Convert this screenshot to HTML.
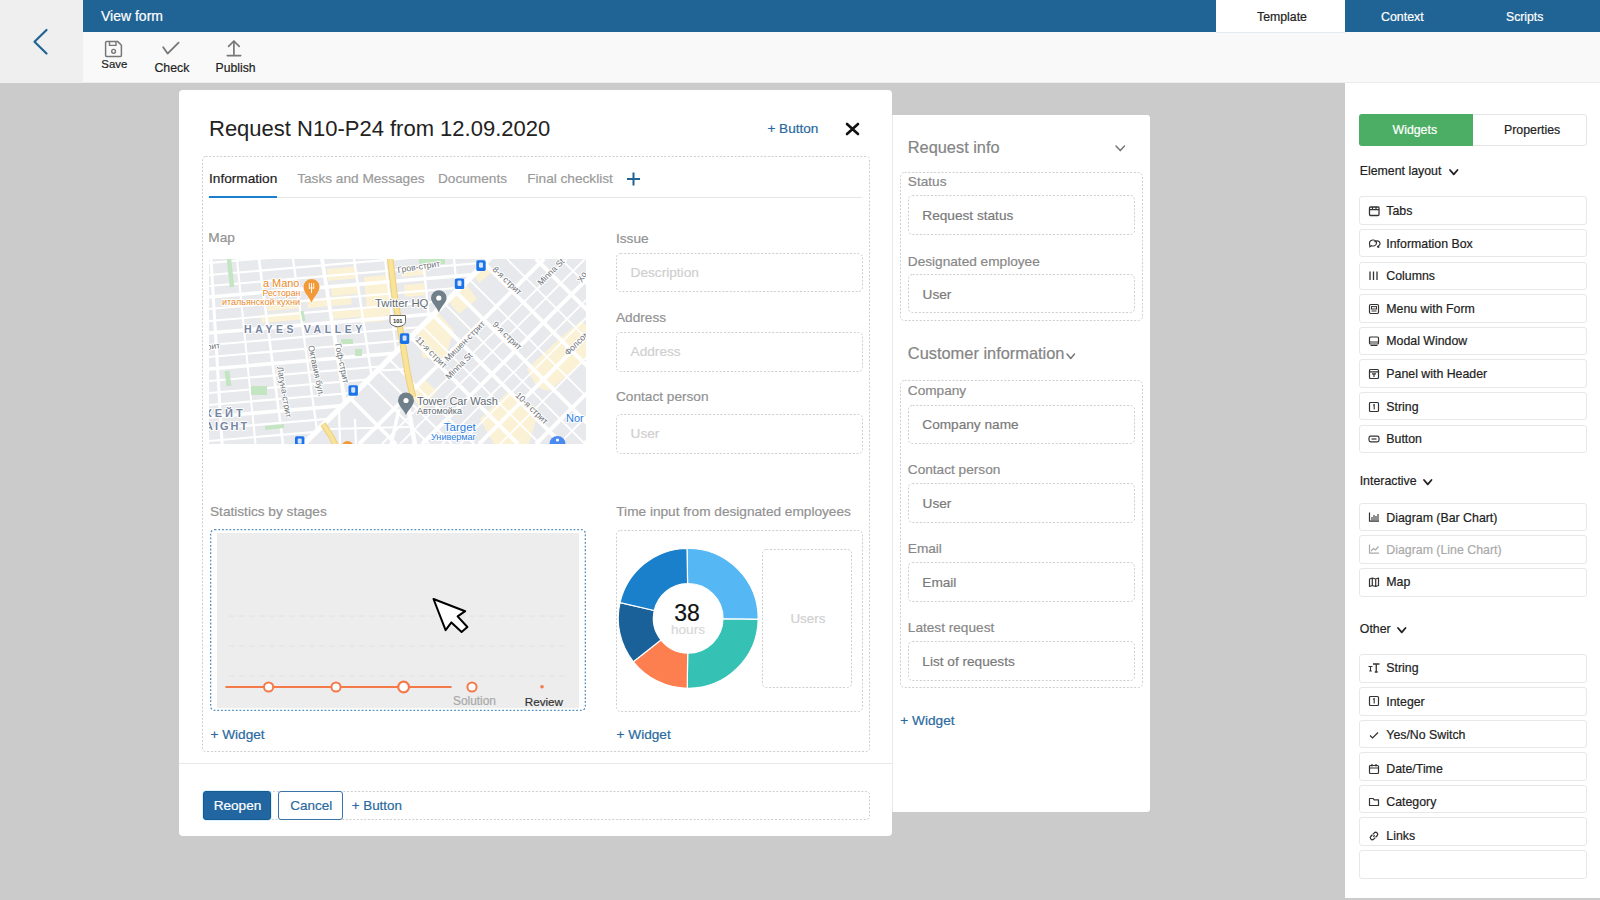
<!DOCTYPE html><html><head><meta charset="utf-8"><style>
html,body{margin:0;padding:0;width:1600px;height:900px;overflow:hidden;background:#cbcbcb;font-family:"Liberation Sans",sans-serif;}
.a{position:absolute;box-sizing:border-box;}
.t{position:absolute;white-space:nowrap;line-height:1;-webkit-text-stroke:0.2px currentColor;}
svg{position:absolute;overflow:visible;}
</style></head><body>

<div class="a" style="left:0px;top:0px;width:83px;height:83px;background:#efefef;"></div>
<div class="a" style="left:83px;top:0px;width:1517px;height:32px;background:#1f6495;"></div>
<div class="a" style="left:83px;top:32px;width:1517px;height:51px;background:#f9f9f9;"></div>
<div class="a" style="left:83px;top:82px;width:1517px;height:1px;background:#ececec;"></div>
<div class="a" style="left:1216px;top:0px;width:129px;height:32px;background:#ffffff;"></div>
<div class="a" style="left:1216px;top:32px;width:129px;height:1px;background:#e4ebf1;"></div>
<div class="t" style="left:101.00px;top:8.75px;font-size:14px;color:#ffffff;">View form</div>
<div class="t" style="left:1257.00px;top:10.89px;font-size:12.3px;color:#222;">Template</div>
<div class="t" style="left:1381.00px;top:10.80px;font-size:12.4px;color:#ffffff;">Context</div>
<div class="t" style="left:1506.00px;top:10.97px;font-size:12.2px;color:#ffffff;">Scripts</div>
<svg style="left:0;top:0" width="83" height="82"><path d="M46.5 30 L34.5 41.8 L46.5 53.5" fill="none" stroke="#1f6495" stroke-width="2.2" stroke-linecap="round" stroke-linejoin="round"/></svg>
<div class="t" style="left:101.30px;top:59.15px;font-size:11.4px;color:#1e1e1e;">Save</div>
<div class="t" style="left:154.40px;top:61.74px;font-size:12.35px;color:#1e1e1e;">Check</div>
<div class="t" style="left:215.60px;top:61.87px;font-size:12.2px;color:#1e1e1e;">Publish</div>
<svg style="left:100;top:36px;left:100px" width="30" height="24"><path d="M6.6 5.6 h11.2 l3.6 3.6 v10.2 a1 1 0 0 1 -1 1 h-13.8 a1 1 0 0 1 -1 -1 v-12.8 a1 1 0 0 1 1 -1z" fill="none" stroke="#777" stroke-width="1.5"/><path d="M9.5 5.8 v3.6 h6.5 v-3.6" fill="none" stroke="#777" stroke-width="1.4"/><circle cx="13.6" cy="15.3" r="1.9" fill="none" stroke="#777" stroke-width="1.4"/></svg>
<svg style="left:150px;top:36px" width="40" height="24"><path d="M13.2 11.2 L17.6 17.6 L28.6 6.6" fill="none" stroke="#777" stroke-width="1.8" stroke-linecap="round" stroke-linejoin="round"/></svg>
<svg style="left:220px;top:36px" width="30" height="24"><path d="M13.9 18.2 V5.4 M8.6 10.4 L13.9 5 L19.2 10.4" fill="none" stroke="#777" stroke-width="1.7" stroke-linecap="round" stroke-linejoin="round"/><path d="M7.4 19.6 H20.6" stroke="#777" stroke-width="1.8" stroke-linecap="round"/></svg>
<div class="a" style="left:1345px;top:83px;width:255px;height:817px;background:#ffffff;"></div>
<div class="a" style="left:1359px;top:114px;width:228px;height:32px;border:1px solid #e6e6e6;border-radius:3px;background:#fff;"></div>
<div class="a" style="left:1359px;top:114px;width:114px;height:32px;background:#4cae64;border-radius:3px 0 0 3px;"></div>
<div class="t" style="left:1392.50px;top:124.24px;font-size:12.35px;color:#ffffff;">Widgets</div>
<div class="t" style="left:1504.00px;top:124.24px;font-size:12.35px;color:#222;">Properties</div>
<div class="t" style="left:1359.70px;top:165.14px;font-size:12.35px;color:#222;">Element layout</div>
<svg style="left:1447.5px;top:168.2px" width="11.5" height="8.4"><path d="M2 2 L5.75 6.4 L9.5 2" fill="none" stroke="#222" stroke-width="1.8" stroke-linecap="round" stroke-linejoin="round"/></svg>
<div class="t" style="left:1359.70px;top:474.84px;font-size:12.35px;color:#222;">Interactive</div>
<svg style="left:1422.3px;top:477.6px" width="11.5" height="8.4"><path d="M2 2 L5.75 6.4 L9.5 2" fill="none" stroke="#222" stroke-width="1.8" stroke-linecap="round" stroke-linejoin="round"/></svg>
<div class="t" style="left:1359.80px;top:622.84px;font-size:12.35px;color:#222;">Other</div>
<svg style="left:1396.2px;top:625.8px" width="11.5" height="8.4"><path d="M2 2 L5.75 6.4 L9.5 2" fill="none" stroke="#222" stroke-width="1.8" stroke-linecap="round" stroke-linejoin="round"/></svg>
<div class="a" style="left:1358.5px;top:196.3px;width:228.5px;height:28.5px;border:1px solid #e8e8e8;border-radius:3px;background:#fff;"></div>
<svg style="left:1368px;top:204.90px" width="12" height="12"><rect x="1.5" y="2" width="9.5" height="8.5" rx="1" fill="none" stroke="#333" stroke-width="1.3"/><path d="M1.5 4.6 H11 M4.5 2 V4.6 M8 2 V4.6" stroke="#333" stroke-width="1.2"/></svg>
<div class="t" style="left:1386.30px;top:205.04px;font-size:12.35px;color:#222;">Tabs</div>
<div class="a" style="left:1358.5px;top:228.9px;width:228.5px;height:28.5px;border:1px solid #e8e8e8;border-radius:3px;background:#fff;"></div>
<svg style="left:1368px;top:237.50px" width="12" height="12"><path d="M1.5 5 a3.5 3 0 1 1 2 2.7 l-1.6 1 z" fill="none" stroke="#333" stroke-width="1.2"/><path d="M6.5 4.2 a3 2.7 0 1 1 3.5 4 l1.2 1.2 l-2.2 -.8" fill="none" stroke="#333" stroke-width="1.2"/></svg>
<div class="t" style="left:1386.30px;top:237.64px;font-size:12.35px;color:#222;">Information Box</div>
<div class="a" style="left:1358.5px;top:261.5px;width:228.5px;height:28.5px;border:1px solid #e8e8e8;border-radius:3px;background:#fff;"></div>
<svg style="left:1368px;top:270.10px" width="12" height="12"><path d="M2 1.5 V10 M5.5 1.5 V10 M9 1.5 V10" stroke="#333" stroke-width="1.3"/></svg>
<div class="t" style="left:1386.30px;top:270.24px;font-size:12.35px;color:#222;">Columns</div>
<div class="a" style="left:1358.5px;top:294.1px;width:228.5px;height:28.5px;border:1px solid #e8e8e8;border-radius:3px;background:#fff;"></div>
<svg style="left:1368px;top:302.70px" width="12" height="12"><rect x="1.5" y="1.5" width="9" height="9" rx="1.2" fill="none" stroke="#333" stroke-width="1.2"/><rect x="3.5" y="3.6" width="5" height="2.4" fill="none" stroke="#333" stroke-width="1"/><path d="M3.5 8 H8.5" stroke="#333" stroke-width="1"/></svg>
<div class="t" style="left:1386.30px;top:302.84px;font-size:12.35px;color:#222;">Menu with Form</div>
<div class="a" style="left:1358.5px;top:326.70000000000005px;width:228.5px;height:28.5px;border:1px solid #e8e8e8;border-radius:3px;background:#fff;"></div>
<svg style="left:1368px;top:335.30px" width="12" height="12"><rect x="1.5" y="2" width="9" height="7" rx="1" fill="none" stroke="#333" stroke-width="1.2"/><path d="M1.5 7 H10.5 M2.5 10.5 H9.5" stroke="#333" stroke-width="1.2"/></svg>
<div class="t" style="left:1386.30px;top:335.44px;font-size:12.35px;color:#222;">Modal Window</div>
<div class="a" style="left:1358.5px;top:359.3px;width:228.5px;height:28.5px;border:1px solid #e8e8e8;border-radius:3px;background:#fff;"></div>
<svg style="left:1368px;top:367.90px" width="12" height="12"><rect x="1.5" y="1.5" width="9" height="9" rx="1" fill="none" stroke="#333" stroke-width="1.2"/><path d="M1.5 3.8 H10.5 M4 5.8 H8 M6 5.8 V9" stroke="#333" stroke-width="1.2"/></svg>
<div class="t" style="left:1386.30px;top:368.04px;font-size:12.35px;color:#222;">Panel with Header</div>
<div class="a" style="left:1358.5px;top:391.90000000000003px;width:228.5px;height:28.5px;border:1px solid #e8e8e8;border-radius:3px;background:#fff;"></div>
<svg style="left:1368px;top:400.50px" width="12" height="12"><rect x="1.5" y="1.5" width="9" height="9" rx="1" fill="none" stroke="#333" stroke-width="1.2"/><path d="M5 4.2 L6.2 3.6 V8.6" fill="none" stroke="#333" stroke-width="1.1"/></svg>
<div class="t" style="left:1386.30px;top:400.64px;font-size:12.35px;color:#222;">String</div>
<div class="a" style="left:1358.5px;top:424.5px;width:228.5px;height:28.5px;border:1px solid #e8e8e8;border-radius:3px;background:#fff;"></div>
<svg style="left:1368px;top:433.10px" width="12" height="12"><rect x="1" y="3.2" width="10" height="5.6" rx="1.8" fill="none" stroke="#333" stroke-width="1.2"/><path d="M3.5 6 H8.5" stroke="#333" stroke-width="1.2"/></svg>
<div class="t" style="left:1386.30px;top:433.24px;font-size:12.35px;color:#222;">Button</div>
<div class="a" style="left:1358.5px;top:502.7px;width:228.5px;height:28.5px;border:1px solid #e8e8e8;border-radius:3px;background:#fff;"></div>
<svg style="left:1368px;top:511.40px" width="12" height="12"><path d="M1.5 1.5 V10.2 H11" fill="none" stroke="#333" stroke-width="1.2"/><path d="M4 9.5 V6 M6 9.5 V4 M8 9.5 V5 M10 9.5 V3" stroke="#333" stroke-width="1.1"/></svg>
<div class="t" style="left:1386.30px;top:511.54px;font-size:12.35px;color:#222;">Diagram (Bar Chart)</div>
<div class="a" style="left:1358.5px;top:535.3px;width:228.5px;height:28.5px;border:1px solid #e8e8e8;border-radius:3px;background:#fff;"></div>
<svg style="left:1368px;top:543.40px" width="12" height="12"><path d="M1.5 1.5 V10.2 H11" fill="none" stroke="#aaa" stroke-width="1.2"/><path d="M3 8 L5.5 5.5 L7.5 7 L10.5 3.5" fill="none" stroke="#aaa" stroke-width="1.2"/></svg>
<div class="t" style="left:1386.30px;top:543.54px;font-size:12.35px;color:#aaa;">Diagram (Line Chart)</div>
<div class="a" style="left:1358.5px;top:568.0px;width:228.5px;height:28.5px;border:1px solid #e8e8e8;border-radius:3px;background:#fff;"></div>
<svg style="left:1368px;top:576.10px" width="12" height="12"><path d="M1.5 3 L4.3 2 L7.7 3 L10.5 2 V9.5 L7.7 10.5 L4.3 9.5 L1.5 10.5 Z M4.3 2 V9.5 M7.7 3 V10.5" fill="none" stroke="#333" stroke-width="1.2" stroke-linejoin="round"/></svg>
<div class="t" style="left:1386.30px;top:576.24px;font-size:12.35px;color:#222;">Map</div>
<div class="a" style="left:1358.5px;top:654.4px;width:228.5px;height:28.5px;border:1px solid #e8e8e8;border-radius:3px;background:#fff;"></div>
<svg style="left:1368px;top:662.00px" width="12" height="12"><path d="M0.5 4.5 H4.5 M2.5 4.5 V9 M1.2 9 H3.8" stroke="#333" stroke-width="1.1"/><path d="M5 2 H11.5 M8.25 2 V10 M6.8 10 H9.7" stroke="#333" stroke-width="1.3"/></svg>
<div class="t" style="left:1386.30px;top:662.14px;font-size:12.35px;color:#222;">String</div>
<div class="a" style="left:1358.5px;top:687.0px;width:228.5px;height:28.5px;border:1px solid #e8e8e8;border-radius:3px;background:#fff;"></div>
<svg style="left:1368px;top:695.40px" width="12" height="12"><rect x="1.5" y="1.5" width="9" height="9" rx="1" fill="none" stroke="#333" stroke-width="1.2"/><path d="M5 4.2 L6.2 3.6 V8.6" fill="none" stroke="#333" stroke-width="1.1"/></svg>
<div class="t" style="left:1386.30px;top:695.54px;font-size:12.35px;color:#222;">Integer</div>
<div class="a" style="left:1358.5px;top:719.6px;width:228.5px;height:28.5px;border:1px solid #e8e8e8;border-radius:3px;background:#fff;"></div>
<svg style="left:1368px;top:729.00px" width="12" height="12"><path d="M2 6.5 L4.6 9 L10 3.5" fill="none" stroke="#333" stroke-width="1.2"/></svg>
<div class="t" style="left:1386.30px;top:729.14px;font-size:12.35px;color:#222;">Yes/No Switch</div>
<div class="a" style="left:1358.5px;top:752.2px;width:228.5px;height:28.5px;border:1px solid #e8e8e8;border-radius:3px;background:#fff;"></div>
<svg style="left:1368px;top:762.70px" width="12" height="12"><rect x="1.5" y="2.5" width="9" height="8" rx="1" fill="none" stroke="#333" stroke-width="1.2"/><path d="M1.5 5 H10.5 M4 1 V3.5 M8 1 V3.5" stroke="#333" stroke-width="1.2"/></svg>
<div class="t" style="left:1386.30px;top:762.84px;font-size:12.35px;color:#222;">Date/Time</div>
<div class="a" style="left:1358.5px;top:784.8px;width:228.5px;height:28.5px;border:1px solid #e8e8e8;border-radius:3px;background:#fff;"></div>
<svg style="left:1368px;top:796.20px" width="12" height="12"><path d="M1.5 2.5 H5 L6.2 3.8 H10.5 V9.5 H1.5 Z" fill="none" stroke="#333" stroke-width="1.2" stroke-linejoin="round"/></svg>
<div class="t" style="left:1386.30px;top:796.34px;font-size:12.35px;color:#222;">Category</div>
<div class="a" style="left:1358.5px;top:817.4px;width:228.5px;height:28.5px;border:1px solid #e8e8e8;border-radius:3px;background:#fff;"></div>
<svg style="left:1368px;top:829.70px" width="12" height="12"><path d="M5.3 6.7 L6.7 5.3 M4.8 4.4 L6.3 2.9 a1.8 1.8 0 0 1 2.8 2.8 L7.6 7.2 M7.2 7.6 L5.7 9.1 a1.8 1.8 0 0 1 -2.8 -2.8 L4.4 4.8" fill="none" stroke="#333" stroke-width="1.3"/></svg>
<div class="t" style="left:1386.30px;top:829.84px;font-size:12.35px;color:#222;">Links</div>
<div class="a" style="left:1358.5px;top:850.0px;width:228.5px;height:28.5px;border:1px solid #e8e8e8;border-radius:3px;background:#fff;"></div>
<div class="a" style="left:1345px;top:898px;width:255px;height:2px;background:#cbcbcb;"></div>
<div class="a" style="left:179px;top:90px;width:713px;height:746px;background:#fff;border-radius:4px;"></div>
<div class="a" style="left:179px;top:763px;width:713px;height:1px;background:#e8e8e8;"></div>
<div class="t" style="left:209.00px;top:117.97px;font-size:22px;color:#222;-webkit-text-stroke:0;">Request N10-P24 from 12.09.2020</div>
<div class="t" style="left:767.40px;top:122.48px;font-size:13.6px;color:#2a6aa0;">+ Button</div>
<svg style="left:843px;top:120px" width="20" height="18"><path d="M4 4 L15 14 M15 4 L4 14" stroke="#111" stroke-width="2.6" stroke-linecap="round"/></svg>
<svg style="left:202px;top:156px" width="668.0" height="596.0"><rect x="0.5" y="0.5" width="667.00" height="595.00" rx="3" fill="none" stroke="#cecece" stroke-width="1" stroke-dasharray="2 1.7"/></svg>
<div class="t" style="left:209.00px;top:171.74px;font-size:13.65px;color:#222;">Information</div>
<div class="t" style="left:297.20px;top:171.74px;font-size:13.65px;color:#9a9a9a;">Tasks and Messages</div>
<div class="t" style="left:438.00px;top:171.74px;font-size:13.65px;color:#9a9a9a;">Documents</div>
<div class="t" style="left:527.20px;top:171.74px;font-size:13.65px;color:#9a9a9a;">Final checklist</div>
<svg style="left:624px;top:170px" width="20" height="18"><path d="M9.5 2.6 V15.4 M3 9 H16" stroke="#1f6495" stroke-width="2" /></svg>
<div class="a" style="left:208px;top:196.5px;width:654px;height:1.0px;background:#e6e6e6;"></div>
<div class="a" style="left:208.6px;top:195.6px;width:68.4px;height:2.4000000000000057px;background:#1b7fcf;"></div>
<div class="t" style="left:208.30px;top:231.44px;font-size:13.65px;color:#929292;">Map</div>
<div class="a" style="left:209px;top:259px;width:377px;height:185px;overflow:hidden"><svg width="377" height="185" viewBox="0 0 377 185" style="left:0;top:0"><defs><clipPath id="cl"><polygon points="0,0 280,0 94,186 0,186"/></clipPath><clipPath id="cr"><polygon points="280,0 377,0 377,185 94,186"/></clipPath></defs><rect width="377" height="185" fill="#e8e9ec"/><g clip-path="url(#cl)"><rect x="118" y="10" width="28" height="12" fill="#fbf1d4" transform="rotate(-5 118 10)"/><rect x="122" y="28" width="28" height="9" fill="#fbf1d4" transform="rotate(-5 122 28)"/><rect x="58" y="44" width="34" height="8" fill="#fbf1d4" transform="rotate(-5 58 44)"/><rect x="98" y="40" width="44" height="9" fill="#fbf1d4" transform="rotate(-5 98 40)"/><rect x="124" y="52" width="32" height="8" fill="#fbf1d4" transform="rotate(-5 124 52)"/><rect x="155" y="18" width="24" height="40" fill="#fbf1d4" transform="rotate(-5 155 18)"/><rect x="150" y="50" width="25" height="14" fill="#fbf1d4" transform="rotate(-5 150 50)"/><rect x="52" y="56" width="40" height="8" fill="#fbf1d4" transform="rotate(-5 52 56)"/><rect x="192" y="8" width="22" height="10" fill="#fbf1d4" transform="rotate(-5 192 8)"/><rect x="195" y="26" width="20" height="12" fill="#fbf1d4" transform="rotate(-5 195 26)"/><line x1="0.0" y1="4.0" x2="377.0" y2="-28.0" stroke="#fff" stroke-width="2.2" stroke-linecap="butt"/><line x1="0.0" y1="16.0" x2="377.0" y2="-16.0" stroke="#fff" stroke-width="2.2" stroke-linecap="butt"/><line x1="0.0" y1="27.0" x2="377.0" y2="-5.0" stroke="#fff" stroke-width="2.2" stroke-linecap="butt"/><line x1="0.0" y1="38.0" x2="377.0" y2="6.0" stroke="#fff" stroke-width="3.6" stroke-linecap="butt"/><line x1="0.0" y1="50.0" x2="377.0" y2="18.0" stroke="#fff" stroke-width="2.2" stroke-linecap="butt"/><line x1="0.0" y1="62.0" x2="377.0" y2="30.0" stroke="#fff" stroke-width="2.2" stroke-linecap="butt"/><line x1="0.0" y1="74.0" x2="377.0" y2="42.0" stroke="#fff" stroke-width="3.6" stroke-linecap="butt"/><line x1="0.0" y1="86.0" x2="377.0" y2="54.0" stroke="#fff" stroke-width="2.2" stroke-linecap="butt"/><line x1="0.0" y1="98.0" x2="377.0" y2="66.0" stroke="#fff" stroke-width="2.2" stroke-linecap="butt"/><line x1="0.0" y1="110.0" x2="377.0" y2="78.0" stroke="#fff" stroke-width="3.6" stroke-linecap="butt"/><line x1="0.0" y1="122.0" x2="377.0" y2="90.0" stroke="#fff" stroke-width="2.2" stroke-linecap="butt"/><line x1="0.0" y1="134.0" x2="377.0" y2="102.0" stroke="#fff" stroke-width="2.2" stroke-linecap="butt"/><line x1="0.0" y1="146.0" x2="377.0" y2="114.0" stroke="#fff" stroke-width="2.2" stroke-linecap="butt"/><line x1="0.0" y1="158.0" x2="377.0" y2="126.0" stroke="#fff" stroke-width="3.6" stroke-linecap="butt"/><line x1="0.0" y1="170.0" x2="377.0" y2="138.0" stroke="#fff" stroke-width="2.2" stroke-linecap="butt"/><line x1="0.0" y1="182.0" x2="377.0" y2="150.0" stroke="#fff" stroke-width="2.2" stroke-linecap="butt"/><line x1="0.0" y1="194.0" x2="377.0" y2="162.0" stroke="#fff" stroke-width="2.2" stroke-linecap="butt"/><line x1="0.0" y1="206.0" x2="377.0" y2="174.0" stroke="#fff" stroke-width="2.2" stroke-linecap="butt"/><line x1="0.0" y1="218.0" x2="377.0" y2="186.0" stroke="#fff" stroke-width="2.2" stroke-linecap="butt"/><line x1="2.0" y1="0.0" x2="13.1" y2="185.0" stroke="#fff" stroke-width="3" stroke-linecap="butt"/><line x1="28.0" y1="0.0" x2="46.5" y2="185.0" stroke="#fff" stroke-width="2.0" stroke-linecap="butt"/><line x1="50.0" y1="0.0" x2="74.0" y2="185.0" stroke="#fff" stroke-width="2.6" stroke-linecap="butt"/><line x1="84.0" y1="0.0" x2="109.9" y2="185.0" stroke="#fff" stroke-width="2.2" stroke-linecap="butt"/><line x1="113.0" y1="0.0" x2="142.6" y2="185.0" stroke="#fff" stroke-width="3.8" stroke-linecap="butt"/><line x1="145.0" y1="0.0" x2="172.8" y2="185.0" stroke="#fff" stroke-width="2.4" stroke-linecap="butt"/><line x1="176.0" y1="0.0" x2="198.2" y2="185.0" stroke="#fff" stroke-width="2.2" stroke-linecap="butt"/><line x1="214.0" y1="0.0" x2="232.5" y2="185.0" stroke="#fff" stroke-width="2.4" stroke-linecap="butt"/><line x1="245.0" y1="0.0" x2="263.5" y2="185.0" stroke="#fff" stroke-width="2.2" stroke-linecap="butt"/><path d="M20 0 L23 28" stroke="#c4e5c2" stroke-width="4.5"/><path d="M93 52 L95 62" stroke="#c4e5c2" stroke-width="3"/><rect x="42" y="127" width="16" height="9" fill="#c4e5c2"/><path d="M18 112 L20 127" stroke="#c4e5c2" stroke-width="5"/><path d="M56 169 L75 167" stroke="#c4e5c2" stroke-width="4"/><rect x="132" y="80" width="12" height="5" fill="#c4e5c2"/><rect x="146" y="90" width="7" height="7" fill="#c4e5c2"/><rect x="210" y="0" width="26" height="5" fill="#c4e5c2"/></g><g clip-path="url(#cr)"><polygon points="205,59 222,45 245,72 236,99 214,99" fill="#fbf1d4"/><polygon points="236,38 256,24 268,40 250,55" fill="#fbf1d4"/><polygon points="259,7 276,0 282,14 270,24" fill="#fbf1d4"/><polygon points="318,110 350,80 372,62 377,66 377,100 340,132 328,128" fill="#fbf1d4"/><polygon points="271,160 300,132 330,150 320,185 285,185" fill="#fbf1d4"/><polygon points="200,135 215,120 228,132 214,150" fill="#fbf1d4"/><line x1="335.0" y1="0.0" x2="150.0" y2="185.0" stroke="#fff" stroke-width="4" stroke-linecap="butt"/><line x1="358.0" y1="0.0" x2="173.0" y2="185.0" stroke="#fff" stroke-width="1.8" stroke-linecap="butt"/><line x1="376.0" y1="0.0" x2="191.0" y2="185.0" stroke="#fff" stroke-width="1.8" stroke-linecap="butt"/><line x1="398.0" y1="0.0" x2="213.0" y2="185.0" stroke="#fff" stroke-width="4" stroke-linecap="butt"/><line x1="418.0" y1="0.0" x2="233.0" y2="185.0" stroke="#fff" stroke-width="1.8" stroke-linecap="butt"/><line x1="436.0" y1="0.0" x2="251.0" y2="185.0" stroke="#fff" stroke-width="1.8" stroke-linecap="butt"/><line x1="455.0" y1="0.0" x2="270.0" y2="185.0" stroke="#fff" stroke-width="4" stroke-linecap="butt"/><line x1="476.0" y1="0.0" x2="291.0" y2="185.0" stroke="#fff" stroke-width="1.8" stroke-linecap="butt"/><line x1="512.0" y1="0.0" x2="327.0" y2="185.0" stroke="#fff" stroke-width="4" stroke-linecap="butt"/><line x1="535.0" y1="0.0" x2="350.0" y2="185.0" stroke="#fff" stroke-width="1.8" stroke-linecap="butt"/><line x1="560.0" y1="0.0" x2="375.0" y2="185.0" stroke="#fff" stroke-width="4" stroke-linecap="butt"/><line x1="2.0" y1="0.0" x2="187.0" y2="185.0" stroke="#fff" stroke-width="3.5" stroke-linecap="butt"/><line x1="35.0" y1="0.0" x2="220.0" y2="185.0" stroke="#fff" stroke-width="2" stroke-linecap="butt"/><line x1="58.0" y1="0.0" x2="243.0" y2="185.0" stroke="#fff" stroke-width="2" stroke-linecap="butt"/><line x1="80.0" y1="0.0" x2="265.0" y2="185.0" stroke="#fff" stroke-width="2" stroke-linecap="butt"/><line x1="124.0" y1="0.0" x2="309.0" y2="185.0" stroke="#fff" stroke-width="4" stroke-linecap="butt"/><line x1="146.0" y1="0.0" x2="331.0" y2="185.0" stroke="#fff" stroke-width="1.8" stroke-linecap="butt"/><line x1="168.0" y1="0.0" x2="353.0" y2="185.0" stroke="#fff" stroke-width="4" stroke-linecap="butt"/><line x1="191.0" y1="0.0" x2="376.0" y2="185.0" stroke="#fff" stroke-width="1.8" stroke-linecap="butt"/><line x1="214.0" y1="0.0" x2="399.0" y2="185.0" stroke="#fff" stroke-width="4" stroke-linecap="butt"/><line x1="240.0" y1="0.0" x2="425.0" y2="185.0" stroke="#fff" stroke-width="1.8" stroke-linecap="butt"/><line x1="271.0" y1="0.0" x2="456.0" y2="185.0" stroke="#fff" stroke-width="4" stroke-linecap="butt"/><line x1="298.0" y1="0.0" x2="483.0" y2="185.0" stroke="#fff" stroke-width="1.8" stroke-linecap="butt"/><line x1="327.0" y1="0.0" x2="512.0" y2="185.0" stroke="#fff" stroke-width="4" stroke-linecap="butt"/><line x1="352.0" y1="0.0" x2="537.0" y2="185.0" stroke="#fff" stroke-width="1.8" stroke-linecap="butt"/><line x1="382.0" y1="0.0" x2="567.0" y2="185.0" stroke="#fff" stroke-width="4" stroke-linecap="butt"/><line x1="130.0" y1="150.0" x2="131.0" y2="186.0" stroke="#fff" stroke-width="2.2" stroke-linecap="butt"/><line x1="146.0" y1="160.0" x2="147.0" y2="186.0" stroke="#fff" stroke-width="2.2" stroke-linecap="butt"/><line x1="120.0" y1="170.0" x2="200.0" y2="168.0" stroke="#fff" stroke-width="2.2" stroke-linecap="butt"/><line x1="160.0" y1="112.0" x2="200.0" y2="110.0" stroke="#fff" stroke-width="2" stroke-linecap="butt"/></g><line x1="284.0" y1="-4.0" x2="90.0" y2="190.0" stroke="#fff" stroke-width="5.5" stroke-linecap="butt"/><line x1="198.0" y1="141.0" x2="206.0" y2="186.0" stroke="#fff" stroke-width="4.5" stroke-linecap="butt"/><line x1="190.0" y1="150.0" x2="182.0" y2="186.0" stroke="#fff" stroke-width="3.5" stroke-linecap="butt"/><path d="M181 -2 L186 40 L193 80 L199 116 L204 138" fill="none" stroke="#ecd07a" stroke-width="6.5"/><path d="M181 -2 L186 40 L193 80 L199 116 L204 138" fill="none" stroke="#f9e29a" stroke-width="4.5"/><path d="M114 165 L122 177 L127 187" fill="none" stroke="#ecd07a" stroke-width="6"/><path d="M114 165 L122 177 L127 187" fill="none" stroke="#f9e29a" stroke-width="4"/><rect x="139.5" y="126.2" width="9.4" height="10.6" rx="1.6" fill="#1a73e8"/><rect x="142.2" y="128.3" width="4" height="5.4" rx="1.2" fill="#d6e4fb"/><rect x="86.0" y="177.29999999999998" width="9.4" height="10.6" rx="1.6" fill="#1a73e8"/><rect x="88.7" y="179.4" width="4" height="5.4" rx="1.2" fill="#d6e4fb"/><rect x="267.3" y="1.2999999999999998" width="9.4" height="10.6" rx="1.6" fill="#1a73e8"/><rect x="270" y="3.3999999999999995" width="4" height="5.4" rx="1.2" fill="#d6e4fb"/><rect x="245.8" y="19.4" width="9.4" height="10.6" rx="1.6" fill="#1a73e8"/><rect x="248.5" y="21.5" width="4" height="5.4" rx="1.2" fill="#d6e4fb"/><rect x="190.9" y="74.3" width="9.4" height="10.6" rx="1.6" fill="#1a73e8"/><rect x="193.6" y="76.39999999999999" width="4" height="5.4" rx="1.2" fill="#d6e4fb"/><path d="M181 56.5 H196.5 V62.5 Q196.5 66.8 188.75 67.8 Q181 66.8 181 62.5 Z" fill="#fff" stroke="#666" stroke-width="1"/><text x="188.75" y="64" font-size="5.8" font-weight="bold" text-anchor="middle" fill="#333" font-family="Liberation Sans">101</text><path d="M102.5 43.5 C99.5 37 94.5 33 94.5 28 A8 8 0 0 1 110.5 28 C110.5 33 105.5 37 102.5 43.5 Z" fill="#f29a38"/><path d="M100.3 24 V30 M102.5 24 V30 M104.7 24 V30 M100.3 29 H104.7 M102.5 30 V34" stroke="#fff" stroke-width="0.9"/><path d="M229.8 53.4 C227 47 222 43 222 39 A7.8 7.8 0 0 1 237.6 39 C237.6 43 232.6 47 229.8 53.4 Z" fill="#70808b"/><circle cx="229.8" cy="39" r="2.6" fill="#fff"/><path d="M197 156 C194 150 189 146 189 141.5 A8 8 0 0 1 205 141.5 C205 146 200 150 197 156 Z" fill="#70808b"/><circle cx="197" cy="141.5" r="2.6" fill="#fff"/><circle cx="348.5" cy="185" r="8" fill="#4a8af0"/><circle cx="348.5" cy="181" r="1.6" fill="#fff"/><circle cx="138.5" cy="188" r="6" fill="#f29a38"/><text x="54" y="27.8" font-size="10.9" fill="#e88a2a" font-family="Liberation Sans" stroke="#fff" stroke-width="2" paint-order="stroke" stroke-linejoin="round">a Mano</text><text x="53.5" y="37" font-size="8.7" fill="#e88a2a" font-family="Liberation Sans" stroke="#fff" stroke-width="2" paint-order="stroke" stroke-linejoin="round">Ресторан</text><text x="13" y="45.5" font-size="9" fill="#e88a2a" font-family="Liberation Sans" stroke="#fff" stroke-width="2" paint-order="stroke" stroke-linejoin="round">итальянской кухни</text><text x="166" y="47.8" font-size="11.3" fill="#5f6b73" font-family="Liberation Sans" stroke="#fff" stroke-width="2" paint-order="stroke" stroke-linejoin="round">Twitter HQ</text><text x="35" y="73.6" font-size="10.5" font-weight="bold" letter-spacing="3.6" fill="#7686a3" font-family="Liberation Sans" stroke="#fff" stroke-width="2" paint-order="stroke" stroke-linejoin="round">HAYES VALLEY</text><text x="208" y="146" font-size="11" fill="#5f6b73" font-family="Liberation Sans" stroke="#fff" stroke-width="2" paint-order="stroke" stroke-linejoin="round">Tower Car Wash</text><text x="208" y="154.6" font-size="9" fill="#5f6b73" font-family="Liberation Sans" stroke="#fff" stroke-width="2" paint-order="stroke" stroke-linejoin="round">Автомойка</text><text x="234.8" y="172" font-size="11.5" fill="#2a7de1" font-family="Liberation Sans" stroke="#fff" stroke-width="2" paint-order="stroke" stroke-linejoin="round">Target</text><text x="222" y="180.8" font-size="9.1" fill="#2a7de1" font-family="Liberation Sans" stroke="#fff" stroke-width="2" paint-order="stroke" stroke-linejoin="round">Универмаг</text><text x="-4" y="157.6" font-size="11" font-weight="bold" letter-spacing="3" fill="#7686a3" font-family="Liberation Sans" stroke="#fff" stroke-width="2" paint-order="stroke" stroke-linejoin="round">КЕЙТ</text><text x="-4" y="170.5" font-size="11" font-weight="bold" letter-spacing="2" fill="#7686a3" font-family="Liberation Sans" stroke="#fff" stroke-width="2" paint-order="stroke" stroke-linejoin="round">AIGHT</text><text x="357" y="163.4" font-size="11" fill="#2a7de1" font-family="Liberation Sans" stroke="#fff" stroke-width="2" paint-order="stroke" stroke-linejoin="round">Nor</text><text transform="translate(189 14) rotate(-9)" font-size="8.6" fill="#6d7277" font-family="Liberation Sans" stroke="#fff" stroke-width="2" paint-order="stroke" stroke-linejoin="round">Гров-стрит</text><text transform="translate(283 11) rotate(44)" font-size="8.6" fill="#6d7277" font-family="Liberation Sans" stroke="#fff" stroke-width="2" paint-order="stroke" stroke-linejoin="round">8-я стрит</text><text transform="translate(283 66) rotate(44)" font-size="8.6" fill="#6d7277" font-family="Liberation Sans" stroke="#fff" stroke-width="2" paint-order="stroke" stroke-linejoin="round">9-я стрит</text><text transform="translate(306 137) rotate(44)" font-size="8.6" fill="#6d7277" font-family="Liberation Sans" stroke="#fff" stroke-width="2" paint-order="stroke" stroke-linejoin="round">10-я стрит</text><text transform="translate(206 81) rotate(45)" font-size="8.6" fill="#6d7277" font-family="Liberation Sans" stroke="#fff" stroke-width="2" paint-order="stroke" stroke-linejoin="round">11-я стрит</text><text transform="translate(239 103) rotate(-45)" font-size="8.6" fill="#6d7277" font-family="Liberation Sans" stroke="#fff" stroke-width="2" paint-order="stroke" stroke-linejoin="round">Мишен-стрит</text><text transform="translate(240 121) rotate(-45)" font-size="8.6" fill="#6d7277" font-family="Liberation Sans" stroke="#fff" stroke-width="2" paint-order="stroke" stroke-linejoin="round">Minna St</text><text transform="translate(332 27) rotate(-45)" font-size="8.6" fill="#6d7277" font-family="Liberation Sans" stroke="#fff" stroke-width="2" paint-order="stroke" stroke-linejoin="round">Minna St</text><text transform="translate(359 97) rotate(-45)" font-size="8.6" fill="#6d7277" font-family="Liberation Sans" stroke="#fff" stroke-width="2" paint-order="stroke" stroke-linejoin="round">Фолсом</text><text transform="translate(373 24) rotate(-60)" font-size="8.6" fill="#6d7277" font-family="Liberation Sans" stroke="#fff" stroke-width="2" paint-order="stroke" stroke-linejoin="round">Хо</text><text transform="translate(99 87) rotate(78)" font-size="8.6" fill="#6d7277" font-family="Liberation Sans" stroke="#fff" stroke-width="2" paint-order="stroke" stroke-linejoin="round">Октавия бул.</text><text transform="translate(126 85) rotate(78)" font-size="8.6" fill="#6d7277" font-family="Liberation Sans" stroke="#fff" stroke-width="2" paint-order="stroke" stroke-linejoin="round">Гоф-стрит</text><text transform="translate(68 108) rotate(80)" font-size="8.6" fill="#6d7277" font-family="Liberation Sans" stroke="#fff" stroke-width="2" paint-order="stroke" stroke-linejoin="round">Лагуна-стрит</text><text transform="translate(-2 91) rotate(-8)" font-size="8.6" fill="#6d7277" font-family="Liberation Sans" stroke="#fff" stroke-width="2" paint-order="stroke" stroke-linejoin="round">рит</text></svg></div>
<div class="t" style="left:616.00px;top:232.14px;font-size:13.65px;color:#929292;">Issue</div>
<svg style="left:616px;top:253px" width="247.0" height="39.0"><rect x="0.5" y="0.5" width="246.00" height="38.00" rx="4" fill="none" stroke="#cecece" stroke-width="1" stroke-dasharray="2 1.7"/></svg>
<div class="t" style="left:630.60px;top:265.94px;font-size:13.65px;color:#cfcfcf;">Description</div>
<div class="t" style="left:616.00px;top:310.64px;font-size:13.65px;color:#929292;">Address</div>
<svg style="left:616px;top:332px" width="247.0" height="40.0"><rect x="0.5" y="0.5" width="246.00" height="39.00" rx="4" fill="none" stroke="#cecece" stroke-width="1" stroke-dasharray="2 1.7"/></svg>
<div class="t" style="left:630.60px;top:344.94px;font-size:13.65px;color:#cfcfcf;">Address</div>
<div class="t" style="left:616.00px;top:390.14px;font-size:13.65px;color:#929292;">Contact person</div>
<svg style="left:616px;top:414px" width="247.0" height="40.0"><rect x="0.5" y="0.5" width="246.00" height="39.00" rx="4" fill="none" stroke="#cecece" stroke-width="1" stroke-dasharray="2 1.7"/></svg>
<div class="t" style="left:630.60px;top:427.14px;font-size:13.65px;color:#cfcfcf;">User</div>
<div class="t" style="left:210.00px;top:504.64px;font-size:13.65px;color:#929292;">Statistics by stages</div>
<div class="t" style="left:616.30px;top:504.64px;font-size:13.65px;color:#929292;">Time input from designated employees</div>
<div class="a" style="left:217px;top:533px;width:362px;height:175px;background:#ededed;"></div>
<svg style="left:210px;top:529px" width="376.0" height="182.0"><rect x="0.65" y="0.65" width="374.70" height="180.70" rx="4" fill="none" stroke="#5590c0" stroke-width="1.3" stroke-dasharray="1.8 1.9"/></svg>
<svg style="left:209px;top:529px" width="378" height="182"><path d="M20 87 H360 M20 117 H360 M20 147 H360" stroke="#e2e2e2" stroke-width="1" stroke-dasharray="6 4"/><path d="M16.4 158 H242.6" stroke="#f47a4a" stroke-width="1.8"/><circle cx="59.6" cy="158" r="4.6" fill="#fff" stroke="#f47a4a" stroke-width="2"/><circle cx="127" cy="158" r="4.6" fill="#fff" stroke="#f47a4a" stroke-width="2"/><circle cx="194.6" cy="158" r="5.4" fill="#fff" stroke="#f47a4a" stroke-width="2.2"/><circle cx="263" cy="158" r="4.6" fill="#fff" stroke="#f47a4a" stroke-width="2"/><circle cx="333" cy="157.7" r="1.8" fill="#f47a4a"/></svg>
<div class="t" style="left:453.00px;top:695.92px;font-size:11.9px;color:#a8a8a8;">Solution</div>
<div class="t" style="left:524.70px;top:696.09px;font-size:11.7px;color:#333;">Review</div>
<svg style="left:0;top:0;width:1600px;height:900px;pointer-events:none" width="1600" height="900"><path d="M433.5 599 L465.2 611.2 L457.6 616.4 L467.4 627 L461.6 632 L451.4 622.4 L445.6 630.2 Z" fill="#fff" stroke="#000" stroke-width="2" stroke-linejoin="round"/></svg>
<svg style="left:616px;top:530px" width="247.0" height="182.0"><rect x="0.5" y="0.5" width="246.00" height="181.00" rx="4" fill="none" stroke="#cecece" stroke-width="1" stroke-dasharray="2 1.7"/></svg>
<svg style="left:762px;top:549px" width="90.0" height="139.0"><rect x="0.5" y="0.5" width="89.00" height="138.00" rx="4" fill="none" stroke="#cecece" stroke-width="1" stroke-dasharray="2 1.7"/></svg>
<div class="t" style="left:790.40px;top:611.95px;font-size:13.4px;color:#cfcfcf;">Users</div>
<svg style="left:0;top:0" width="1600" height="900"><path d="M686.98 548.31 A70 70 0 0 1 758.19 619.28 L723.00 618.79 A34.8 34.8 0 0 0 687.59 583.51 Z" fill="#55b7f3" stroke="#fff" stroke-width="1.2"/><path d="M758.19 619.28 A70 70 0 0 1 687.22 688.29 L687.71 653.10 A34.8 34.8 0 0 0 723.00 618.79 Z" fill="#35c1b3" stroke="#fff" stroke-width="1.2"/><path d="M687.22 688.29 A70 70 0 0 1 633.34 661.78 L660.93 639.92 A34.8 34.8 0 0 0 687.71 653.10 Z" fill="#fd7e4f" stroke="#fff" stroke-width="1.2"/><path d="M633.34 661.78 A70 70 0 0 1 619.99 602.55 L654.29 610.47 A34.8 34.8 0 0 0 660.93 639.92 Z" fill="#1a6199" stroke="#fff" stroke-width="1.2"/><path d="M619.99 602.55 A70 70 0 0 1 686.98 548.31 L687.59 583.51 A34.8 34.8 0 0 0 654.29 610.47 Z" fill="#1b80cb" stroke="#fff" stroke-width="1.2"/></svg>
<div class="t" style="left:674.30px;top:601.53px;font-size:23px;color:#111;">38</div>
<div class="t" style="left:671.00px;top:623.48px;font-size:13.6px;color:#d8d8d8;">hours</div>
<div class="t" style="left:210.40px;top:728.04px;font-size:13.65px;color:#2a6aa0;">+ Widget</div>
<div class="t" style="left:616.50px;top:728.04px;font-size:13.65px;color:#2a6aa0;">+ Widget</div>
<svg style="left:203px;top:791px" width="667.0" height="29.0"><rect x="0.5" y="0.5" width="666.00" height="28.00" rx="3" fill="none" stroke="#cecece" stroke-width="1" stroke-dasharray="2 1.7"/></svg>
<div class="a" style="left:202.6px;top:791px;width:68.4px;height:29px;background:#2166a0;border:1px solid #135b8e;border-radius:3px;box-shadow:0 0 0 0.6px #bfe6ff;"></div>
<div class="t" style="left:213.70px;top:798.68px;font-size:13.6px;color:#ffffff;">Reopen</div>
<div class="a" style="left:278.4px;top:791px;width:64.80000000000001px;height:29px;background:#fff;border:1px solid #3a73a6;border-radius:3px;"></div>
<div class="t" style="left:290.20px;top:798.77px;font-size:13.5px;color:#2a6aa0;">Cancel</div>
<div class="t" style="left:351.70px;top:798.85px;font-size:13.4px;color:#2a6aa0;">+ Button</div>
<div class="a" style="left:891.5px;top:115px;width:258.0px;height:697px;background:#fff;border-radius:0 3px 3px 0;"></div>
<div class="a" style="left:891.5px;top:115px;width:1.5px;height:697px;background:#e9e9e9;"></div>
<div class="t" style="left:907.80px;top:138.96px;font-size:16.35px;color:#858585;">Request info</div>
<svg style="left:1114px;top:143.5px" width="12.5" height="8.6"><path d="M2 2 L6.25 6.6 L10.5 2" fill="none" stroke="#777" stroke-width="1.5" stroke-linecap="round" stroke-linejoin="round"/></svg>
<svg style="left:900px;top:172px" width="243.0" height="149.0"><rect x="0.5" y="0.5" width="242.00" height="148.00" rx="4" fill="none" stroke="#cecece" stroke-width="1" stroke-dasharray="2 1.7"/></svg>
<div class="t" style="left:907.80px;top:175.14px;font-size:13.65px;color:#888;">Status</div>
<svg style="left:908px;top:195px" width="227.0" height="40.0"><rect x="0.5" y="0.5" width="226.00" height="39.00" rx="4" fill="none" stroke="#cecece" stroke-width="1" stroke-dasharray="2 1.7"/></svg>
<div class="t" style="left:922.30px;top:208.64px;font-size:13.65px;color:#7a7a7a;">Request status</div>
<div class="t" style="left:907.80px;top:254.54px;font-size:13.65px;color:#888;">Designated employee</div>
<svg style="left:908px;top:274px" width="227.0" height="39.0"><rect x="0.5" y="0.5" width="226.00" height="38.00" rx="4" fill="none" stroke="#cecece" stroke-width="1" stroke-dasharray="2 1.7"/></svg>
<div class="t" style="left:922.60px;top:287.84px;font-size:13.65px;color:#7a7a7a;">User</div>
<div class="t" style="left:907.80px;top:345.21px;font-size:16.4px;color:#858585;">Customer information</div>
<svg style="left:1064.5px;top:351.5px" width="11.5" height="8.5"><path d="M2 2 L5.75 6.5 L9.5 2" fill="none" stroke="#777" stroke-width="1.5" stroke-linecap="round" stroke-linejoin="round"/></svg>
<svg style="left:900px;top:380px" width="243.0" height="308.0"><rect x="0.5" y="0.5" width="242.00" height="307.00" rx="4" fill="none" stroke="#cecece" stroke-width="1" stroke-dasharray="2 1.7"/></svg>
<div class="t" style="left:907.80px;top:384.44px;font-size:13.65px;color:#888;">Company</div>
<svg style="left:908px;top:405px" width="227.0" height="39.0"><rect x="0.5" y="0.5" width="226.00" height="38.00" rx="4" fill="none" stroke="#cecece" stroke-width="1" stroke-dasharray="2 1.7"/></svg>
<div class="t" style="left:922.30px;top:418.34px;font-size:13.65px;color:#7a7a7a;">Company name</div>
<div class="t" style="left:907.80px;top:463.14px;font-size:13.65px;color:#888;">Contact person</div>
<svg style="left:908px;top:483px" width="227.0" height="40.0"><rect x="0.5" y="0.5" width="226.00" height="39.00" rx="4" fill="none" stroke="#cecece" stroke-width="1" stroke-dasharray="2 1.7"/></svg>
<div class="t" style="left:922.60px;top:496.74px;font-size:13.65px;color:#7a7a7a;">User</div>
<div class="t" style="left:907.80px;top:542.34px;font-size:13.65px;color:#888;">Email</div>
<svg style="left:908px;top:562px" width="227.0" height="40.0"><rect x="0.5" y="0.5" width="226.00" height="39.00" rx="4" fill="none" stroke="#cecece" stroke-width="1" stroke-dasharray="2 1.7"/></svg>
<div class="t" style="left:922.30px;top:576.14px;font-size:13.65px;color:#7a7a7a;">Email</div>
<div class="t" style="left:907.80px;top:621.14px;font-size:13.65px;color:#888;">Latest request</div>
<svg style="left:908px;top:641px" width="227.0" height="40.0"><rect x="0.5" y="0.5" width="226.00" height="39.00" rx="4" fill="none" stroke="#cecece" stroke-width="1" stroke-dasharray="2 1.7"/></svg>
<div class="t" style="left:922.30px;top:655.14px;font-size:13.65px;color:#7a7a7a;">List of requests</div>
<div class="t" style="left:900.30px;top:714.14px;font-size:13.65px;color:#2a6aa0;">+ Widget</div>
</body></html>
